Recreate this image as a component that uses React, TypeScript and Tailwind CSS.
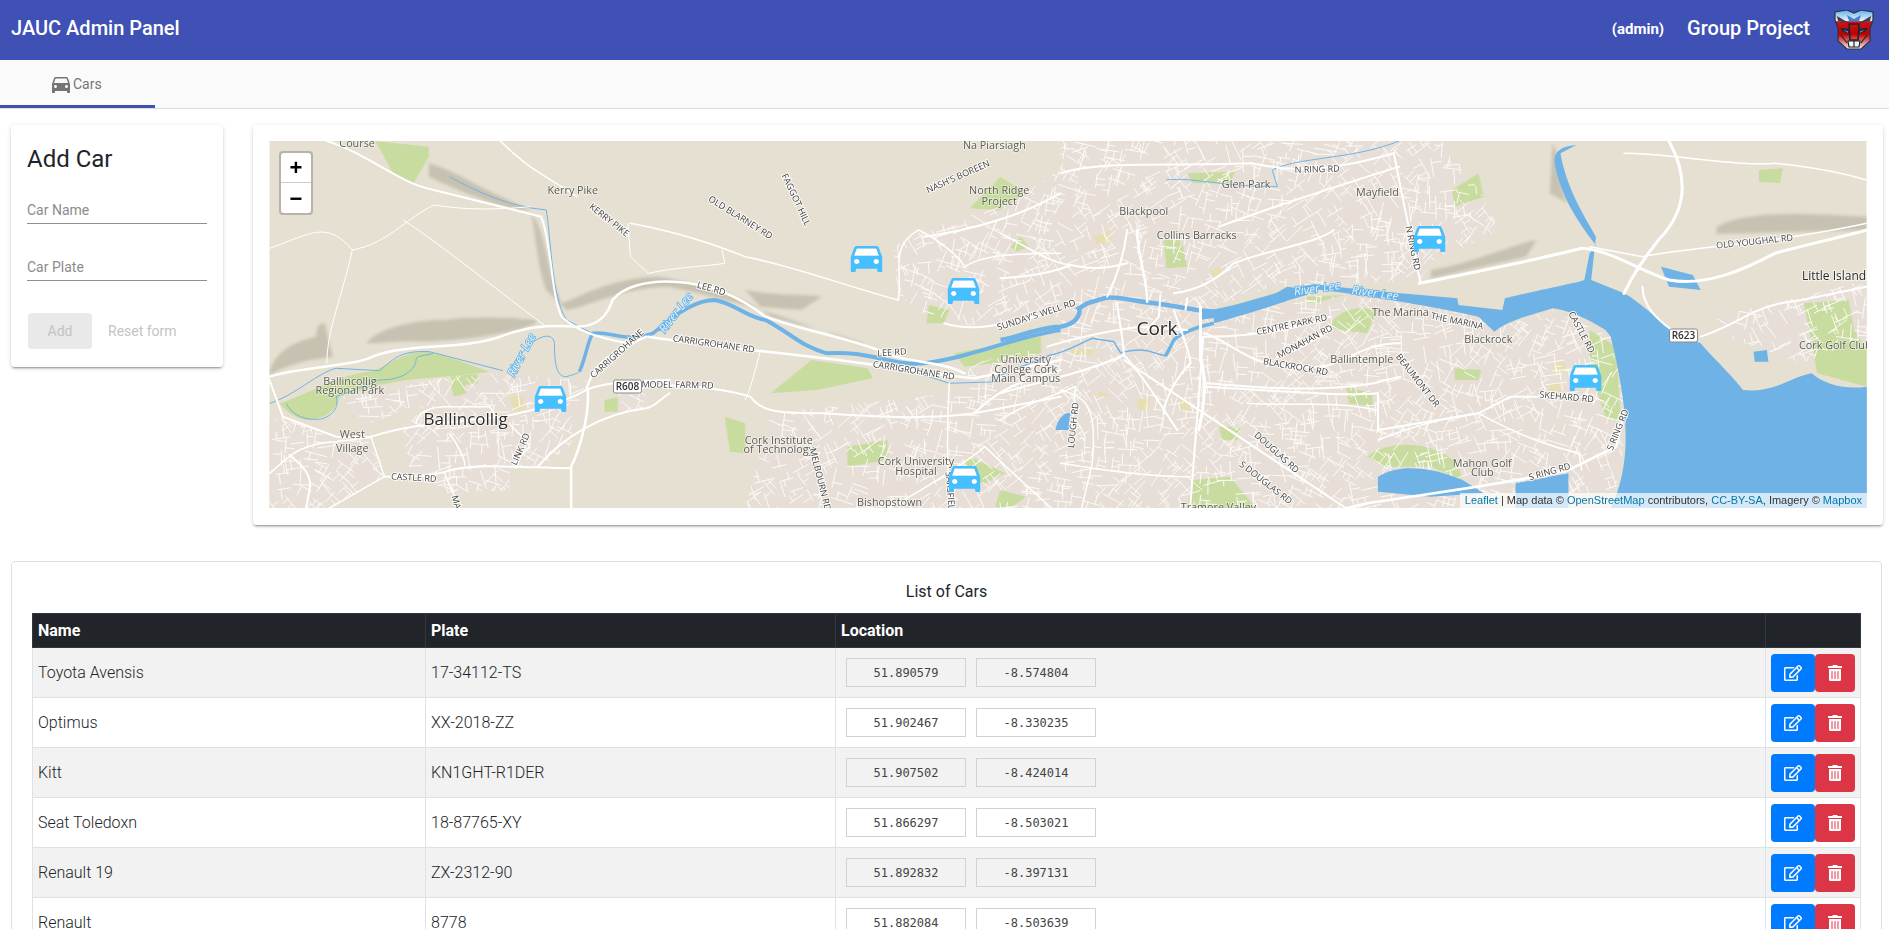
import { MdDirectionsCar } from "react-icons/md";
import { FaRegEdit, FaTrashAlt } from "react-icons/fa";

const cars = [
  { name: "Toyota Avensis", plate: "17-34112-TS", lat: "51.890579", lng: "-8.574804" },
  { name: "Optimus", plate: "XX-2018-ZZ", lat: "51.902467", lng: "-8.330235" },
  { name: "Kitt", plate: "KN1GHT-R1DER", lat: "51.907502", lng: "-8.424014" },
  { name: "Seat Toledoxn", plate: "18-87765-XY", lat: "51.866297", lng: "-8.503021" },
  { name: "Renault 19", plate: "ZX-2312-90", lat: "51.892832", lng: "-8.397131" },
  { name: "Renault", plate: "8778", lat: "51.882084", lng: "-8.503639" },
];

// map paths are traced in crops of the picture, so each crop has its own transform
const WEST = "translate(260 130) scale(.5102 .3333)";
const EAST = "translate(1060 130) scale(.5291 .3333)";
const BALL = "translate(269 300) scale(.3333)";
const CITY = "translate(1000 230) scale(.3333)";

type Shape = [string, string];
type Line = [string, string, number];

const urban: Shape[] = [
  [BALL, "M0 360L40 355L200 410L300 420L345 530L180 624L0 624Z"],
  [BALL, "M400 390L440 345L650 330L720 360L900 300L950 280L900 440L800 510L720 505L720 570L500 580L420 510Z"],
  [BALL, "M220 290L540 230L640 220L800 230L950 240L940 280L720 340L430 320L280 380Z"],
  [BALL, "M1040 270L1130 240L1135 320L1040 345Z"],
  [WEST, "M1000 850L1350 790L1400 700L1568 640L1568 1135L950 1135Z"],
  [WEST, "M1250 500L1240 350L1300 300L1450 230L1568 120L1568 560L1440 590L1330 580Z"],
  [EAST, "M0 33L720 33L800 200L830 300L700 400L680 450L400 470L270 540L0 600Z"],
  [EAST, "M0 560L270 550L420 490L740 520L830 590L930 540L1040 620L1075 850L1050 1080L700 1135L0 1135Z"],
  [EAST, "M1240 560L1400 500L1524 450L1524 620L1400 700L1260 620Z"],
];

const hills: Shape[] = [
  [BALL, "M0 220C10 170 50 130 140 110C140 80 150 70 165 70L175 110L190 170C100 180 40 200 0 225Z"],
  [BALL, "M290 130C320 90 420 60 520 60C600 50 700 50 800 60L800 70C700 110 560 120 480 125C400 120 340 130 290 130Z"],
  [WEST, "M530 250C560 300 560 420 590 520C640 490 700 440 780 440C860 460 950 500 1000 560C1060 590 1150 610 1190 650L1100 600C1040 570 960 520 800 470C720 470 660 520 600 540L560 480C540 400 540 300 530 250Z"],
  [WEST, "M330 100C380 120 420 170 530 240L500 240C430 210 370 170 330 140Z"],
  [WEST, "M950 480C1020 500 1060 490 1100 500L1060 540L980 530Z"],
  [EAST, "M700 420C780 400 860 340 900 330L880 380L700 445Z"],
  [EAST, "M1240 290C1300 240 1400 250 1524 260L1524 300L1240 312Z"],
  [EAST, "M930 40C950 100 940 180 960 220L925 190Z"],
  [CITY, "M720 115L880 120L1000 90L1180 70L1180 110L1000 130L800 160Z"],
];

const parks: Shape[] = [
  [WEST, "M225 33L330 50L330 80L300 160L260 130Z"],
  [BALL, "M30 310C120 280 220 220 300 215C360 200 400 150 480 155C540 170 620 200 660 215L580 225L410 240L330 255L210 290C200 340 150 360 110 360C60 350 40 320 30 310Z"],
  [BALL, "M540 230L580 225L590 280L552 290ZM582 225L625 222L625 250L585 255Z"],
  [BALL, "M1005 300L1045 292L1045 335L1005 335Z"],
  [WEST, "M1080 690L1190 715L1200 745L1090 780L1000 790Z"],
  [WEST, "M1360 670L1530 620L1530 670L1440 700L1380 710Z"],
  [WEST, "M1310 525L1350 540L1340 580L1305 580Z"],
  [WEST, "M1390 235L1450 140L1500 190L1450 240Z"],
  [WEST, "M910 860L950 880L950 970L920 965Z"],
  [WEST, "M1150 950L1230 930L1230 990L1150 1010Z"],
  [WEST, "M1390 980L1460 1030L1420 1060L1360 1040Z"],
  [WEST, "M1450 1080L1500 1100L1470 1135L1440 1130Z"],
  [EAST, "M240 130L330 125L320 160L250 160Z"],
  [EAST, "M195 330L225 330L235 410L200 415Z"],
  [EAST, "M740 180L790 130L800 200L745 230Z"],
  [CITY, "M30 50L60 20L85 50L50 65ZM500 50L545 40L560 110L510 110ZM990 280C1030 230 1080 230 1130 240L1100 310L1010 300ZM915 200L1030 195L960 215L915 220ZM0 350L60 325L120 320L110 355L40 380Z"],
  [EAST, "M745 715L795 720L790 750L745 750Z"],
  [EAST, "M1405 520L1490 510L1500 600L1524 660L1524 770L1430 730L1420 640Z"],
  [EAST, "M1320 120L1365 115L1360 160L1320 155Z"],
  [EAST, "M580 980C620 930 700 930 750 1000L760 1050L700 1010L610 1010Z"],
  [EAST, "M250 1050L320 1040L370 1135L240 1135Z"],
  [EAST, "M1000 600L1050 650L1060 880L1030 860L1000 720Z"],
  [EAST, "M300 890L340 890L335 930L305 930Z"],
  [EAST, "M540 770L590 790L590 830L545 820Z"],
];

const sandy: Shape[] = [
  [BALL, "M718 290L760 285L765 330L735 335Z"],
  [CITY, "M280 20L330 0L330 40L285 45ZM630 120L665 110L660 140L635 140ZM535 500L575 520L565 550L540 540ZM410 510L450 500L445 540L415 540ZM290 485L325 490L320 500L295 500ZM210 360L280 355L280 375L215 375Z"],
  [EAST, "M930 700L955 695L955 730L930 730ZM920 760L945 755L945 790L925 790Z"],
];

const water: Shape[] = [
  [EAST, "M262 545C340 530 420 475 480 462C560 480 650 490 750 505L752 525L835 540L840 505C900 480 960 465 990 450L1000 370L1012 345C990 300 950 220 935 110C930 70 940 50 975 45L945 70C955 170 990 260 1012 320L1003 450L1065 490C1090 510 1130 570 1155 600L1210 640C1230 680 1260 720 1290 780C1350 790 1380 740 1420 730C1440 760 1480 780 1524 770L1524 1135L1040 1135C1080 1000 1075 850 1040 620L1030 600C1000 570 960 540 930 535C880 560 850 570 820 605L790 560C700 530 600 500 480 478C420 500 340 560 262 570Z"],
  [EAST, "M600 1040C640 1000 700 1010 760 1050L800 1090L700 1100L600 1085Z"],
  [EAST, "M860 1060L960 1030L960 1135L860 1135Z"],
  [EAST, "M1135 410L1195 435L1210 480L1150 470Z"],
  [EAST, "M1310 665L1335 660L1338 695L1312 695Z"],
  [CITY, "M165 600C170 570 190 545 210 550L205 600Z"],
  [CITY, "M640 240C720 240 790 215 860 170L900 175L920 195C860 210 800 235 640 280Z"],
];

const rivers: Line[] = [
  [WEST, "M780 600C820 540 860 510 890 510C930 520 950 560 990 570C1040 610 1060 650 1110 670C1190 660 1240 710 1300 700C1400 680 1480 620 1568 600", 4],
  [BALL, "M930 215C950 170 955 120 970 100C1020 90 1060 130 1150 100L1200 60", 3.5],
  [BALL, "M720 210C790 100 850 90 855 130C855 190 860 230 890 230C910 225 925 220 930 215", 1],
  [BALL, "M0 310C70 290 150 215 200 205L330 212C370 180 390 150 480 155L700 212", 1],
  [BALL, "M50 310C70 350 110 360 150 358C190 350 210 320 200 290L330 240C400 240 440 210 440 175C450 165 480 165 490 160", 1],
  [WEST, "M370 140C430 190 490 230 560 240C570 330 570 500 600 570L650 610", 1],
  [WEST, "M1230 700L1350 760L1450 755", 1],
  [CITY, "M0 330C60 320 120 290 180 290C240 280 240 240 235 235L260 220L310 205C340 195 400 215 480 222L590 240L640 245", 4.5],
  [CITY, "M640 280C590 290 540 310 520 330C510 350 500 370 495 378", 3.5],
  [CITY, "M495 378L440 362C400 355 380 365 360 368L340 335L275 325C230 345 190 370 150 375L0 435", 1.5],
  [EAST, "M200 150C250 140 300 170 410 170L400 120C450 80 550 90 640 33", 1],
];

const roads: Line[] = [
  [WEST, "M18 740C80 710 180 710 220 680C280 640 400 660 470 620C520 590 560 585 620 590C660 590 680 560 690 510C710 470 760 450 810 455C880 460 940 500 990 560C1060 600 1140 620 1210 660C1260 700 1330 690 1380 730", 2.5],
  [WEST, "M760 620C850 640 960 660 1080 680C1200 700 1300 730 1400 745L1568 690", 2.5],
  [WEST, "M700 770C800 760 900 770 960 800C980 840 1000 850 1100 850C1200 860 1300 870 1400 850L1568 800", 2],
  [WEST, "M130 33C210 70 270 160 340 180C420 210 500 240 550 260C570 330 570 500 590 560C620 600 650 620 720 640", 2],
  [WEST, "M18 355C100 310 130 270 180 360C160 500 130 600 130 700", 1],
  [WEST, "M180 360C250 340 280 270 340 225C400 240 460 240 530 230", 1],
  [WEST, "M280 270C350 340 430 440 560 590", 1],
  [WEST, "M470 33C520 110 560 140 590 170L620 200", 1.5],
  [WEST, "M725 280C830 310 900 350 950 380C1050 410 1150 470 1250 510", 1.5],
  [WEST, "M720 280L725 380L760 430C820 410 870 410 910 400L905 360", 1],
  [WEST, "M980 660C970 720 960 780 950 810", 1],
  [WEST, "M1350 760C1345 900 1345 1000 1350 1135", 1.5],
  [WEST, "M1400 850C1450 770 1500 750 1568 720", 2],
  [WEST, "M1230 1135C1300 1080 1380 1000 1420 950C1480 1040 1520 1090 1550 1135", 1.5],
  [WEST, "M1250 510C1260 430 1230 350 1290 300C1330 330 1370 380 1380 410C1420 370 1500 370 1568 370", 1.5],
  [WEST, "M1300 320C1350 310 1450 280 1530 220L1568 190", 2],
  [WEST, "M1340 580C1380 600 1430 600 1568 540", 2],
  [BALL, "M950 270C970 200 1000 170 1130 110", 2.5],
  [BALL, "M0 240L40 350L200 410L300 412C400 380 450 375 700 350C800 330 900 300 950 270C1000 250 1050 245 1200 240", 2],
  [BALL, "M955 270C960 350 930 450 905 500L905 624", 2.5],
  [BALL, "M805 500C880 410 1000 340 1130 325C1160 320 1180 290 1200 280", 2],
  [BALL, "M0 520C50 480 80 430 200 425L305 412L345 530L180 624", 1.5],
  [BALL, "M345 530C420 530 480 530 530 515C590 490 700 500 905 505", 2],
  [BALL, "M440 370C440 340 480 320 530 320L660 320C680 340 670 360 690 350", 1.5],
  [BALL, "M540 400C570 440 590 490 585 495M525 520L570 624M720 370C740 400 780 420 780 440L730 495", 1.5],
  [BALL, "M60 465C90 490 130 520 120 570L110 624", 2],
  [EAST, "M1150 33C1190 150 1180 250 1130 330C1100 390 1080 440 1065 490", 3],
  [EAST, "M678 460C800 420 900 390 985 355C1040 360 1090 420 1150 450C1220 470 1290 420 1350 370C1420 340 1480 320 1524 300", 3],
  [EAST, "M1000 350L1100 380C1200 350 1350 340 1524 280", 1.5],
  [EAST, "M1065 70C1150 70 1280 110 1350 100C1420 110 1480 130 1524 150", 1.5],
  [EAST, "M1210 620C1300 570 1300 530 1400 510L1524 470", 2],
  [EAST, "M1100 470C1100 530 1130 570 1155 600", 2],
  [EAST, "M0 130C80 90 200 110 360 100C450 130 520 120 630 70L650 230L680 455", 2],
  [EAST, "M300 290C400 230 560 150 640 110", 2],
  [EAST, "M270 770C400 780 520 800 600 790L600 900L790 850L850 800L1000 800", 2],
  [EAST, "M540 1135L580 1120C700 1090 850 1060 960 1020L1050 950L1065 850", 2.5],
  [EAST, "M600 930C680 880 740 860 790 850C850 900 900 940 980 970L985 1020", 1.5],
  [CITY, "M0 145C100 140 180 120 210 105C280 120 320 115 380 100", 2],
  [CITY, "M320 200C350 140 370 80 380 0", 2],
  [CITY, "M410 0C410 80 440 140 440 215", 2.5],
  [CITY, "M520 190C600 180 660 140 700 100C800 60 950 40 1000 0", 2],
  [CITY, "M600 230L600 390C620 450 610 540 595 600", 3],
  [CITY, "M370 375C430 440 470 510 530 600", 2],
  [CITY, "M370 375C280 420 100 460 0 490", 2],
  [CITY, "M620 460C760 470 940 490 1120 460L1200 440", 2],
  [CITY, "M610 320C700 320 850 310 990 260", 2],
  [CITY, "M610 310C680 330 720 380 800 400C860 410 950 420 1000 400C1060 380 1100 340 1200 340", 2],
  [CITY, "M740 520C850 530 1000 510 1130 540", 1.5],
  [CITY, "M830 380C900 360 960 320 990 290", 2],
  [CITY, "M350 220C360 300 370 340 370 375", 2],
  [CITY, "M520 240C540 300 570 370 570 400C530 440 490 510 490 550", 2],
  [CITY, "M140 350C200 330 330 300 420 290L560 300", 2],
  [CITY, "M480 195L475 260L440 300M560 205L555 240", 2],
  [CITY, "M0 10C80 50 150 100 210 105", 1.5],
  [CITY, "M225 470L215 600M0 570C60 530 120 510 225 470", 1.5],
  [EAST, "M120 690L540 1135", 2],
  [EAST, "M270 620L245 1135", 2],
  [EAST, "M0 1000C80 1020 160 1040 245 1040", 1.5],
  [EAST, "M0 780C50 800 70 830 60 1000L40 1135", 1.5],
];

type Label = [string, number, number, number, "p" | "r" | "b" | "c" | "i" | "w"];

// positions are centres measured on the 1568 wide preview
const labels: Label[] = [
  ["Course", 296, 120, 0, "p"],
  ["Kerry Pike", 475, 159, 0, "p"],
  ["KERRY PIKE", 505, 183, 38, "r"],
  ["OLD BLARNEY RD", 614, 181, 32, "r"],
  ["FAGGOT HILL", 660, 166, 65, "r"],
  ["Na Piarsiagh", 825, 121, 0, "p"],
  ["NASH'S BOREEN", 795, 147, -24, "r"],
  ["North Ridge", 829, 159, 0, "p"],
  ["Project", 829, 168, 0, "p"],
  ["LEE RD", 590, 240, 16, "r"],
  ["River Lee", 561, 260, -52, "w"],
  ["River Lee", 433, 295, -62, "w"],
  ["CARRIGROHANE", 512, 294, -42, "r"],
  ["CARRIGROHANE RD", 592, 286, 8, "r"],
  ["CARRIGROHANE RD", 758, 308, 9, "r"],
  ["LEE RD", 740, 293, -4, "r"],
  ["SUNDAY'S WELL RD", 860, 262, -18, "r"],
  ["University", 851, 299, 0, "p"],
  ["College Cork", 851, 307, 0, "p"],
  ["Main Campus", 851, 315, 0, "p"],
  ["MODEL FARM RD", 562, 320, 1, "r"],
  ["Ballincollig", 290, 317, 0, "p"],
  ["Regional Park", 290, 325, 0, "p"],
  ["Ballincollig", 386, 349, 0, "c"],
  ["West", 292, 361, 0, "p"],
  ["Village", 292, 373, 0, "p"],
  ["LINK RD", 432, 373, -66, "r"],
  ["CASTLE RD", 343, 397, 3, "r"],
  ["Cork Institute", 646, 366, 0, "p"],
  ["of Technology", 646, 374, 0, "p"],
  ["MELBOURN RD", 680, 398, 76, "r"],
  ["Cork University", 760, 384, 0, "p"],
  ["Hospital", 760, 392, 0, "p"],
  ["Bishopstown", 738, 418, 0, "p"],
  ["SARSFIELD", 788, 410, 85, "r"],
  ["MA", 378, 417, 76, "r"],
  ["N RING RD", 1093, 141, -2, "r"],
  ["Glen Park", 1034, 154, 0, "p"],
  ["Mayfield", 1143, 160, 0, "p"],
  ["Blackpool", 949, 176, 0, "p"],
  ["Collins Barracks", 993, 196, 0, "p"],
  ["N RING RD", 1172, 206, 78, "r"],
  ["OLD YOUGHAL RD", 1456, 201, -6, "r"],
  ["Little Island", 1522, 230, 0, "i"],
  ["River Lee", 1093, 240, -8, "w"],
  ["River Lee", 1141, 244, 8, "w"],
  ["The Marina", 1162, 260, 0, "p"],
  ["THE MARINA", 1209, 267, 12, "r"],
  ["Cork", 960, 274, 0, "b"],
  ["CENTRE PARK RD", 1072, 270, -12, "r"],
  ["MONAHAN RD", 1083, 284, -28, "r"],
  ["Blackrock", 1235, 282, 0, "p"],
  ["CASTLE RD", 1312, 276, 62, "r"],
  ["Cork Golf Club", 1523, 287, 0, "p"],
  ["Ballintemple", 1130, 299, 0, "p"],
  ["BLACKROCK RD", 1075, 305, 10, "r"],
  ["BEAUMONT DR", 1176, 316, 52, "r"],
  ["SKEHARD RD", 1300, 330, 5, "r"],
  ["LOUGH RD", 891, 353, -84, "r"],
  ["DOUGLAS RD", 1059, 376, 42, "r"],
  ["S DOUGLAS RD", 1050, 401, 38, "r"],
  ["S RING RD", 1286, 392, -16, "r"],
  ["S RING RD", 1343, 357, -68, "r"],
  ["Mahon Golf", 1230, 385, 0, "p"],
  ["Club", 1230, 393, 0, "p"],
  ["Tramore Valley", 1011, 422, 0, "p"],
];

const markers = [
  [866, 259],
  [963, 291],
  [550, 399],
  [964, 479],
  [1429, 239],
  [1585, 378],
];

const shields: [string, number, number][] = [
  ["R608", 627, 386],
  ["R623", 1683, 335],
];

// little residential combs of white streets, same every render
function streetCombs(x0: number, y0: number, x1: number, y1: number, step: number) {
  let seed = 11;
  const rnd = () => {
    seed = (seed * 16807) % 2147483647;
    return seed / 2147483647;
  };
  let d = "";
  for (let y = y0; y < y1; y += step) {
    for (let x = x0; x < x1; x += step) {
      const px = x + rnd() * step;
      const py = y + rnd() * step;
      const a = Math.floor(x / 90 + y / 70) * 0.7 + (rnd() - 0.5) * 0.5 + (rnd() > 0.5 ? 1.57 : 0);
      const len = step * (0.9 + rnd() * 0.9);
      const cos = Math.cos(a);
      const sin = Math.sin(a);
      d += `M${px.toFixed(1)} ${py.toFixed(1)}l${(cos * len).toFixed(1)} ${(sin * len).toFixed(1)}`;
      const stubs = Math.floor(rnd() * 3);
      for (let s = 0; s < stubs; s++) {
        const t = (s + 0.6) / 2.4;
        const side = rnd() > 0.5 ? 1 : -1;
        const l = 5 + rnd() * 6;
        d += `M${(px + cos * len * t).toFixed(1)} ${(py + sin * len * t).toFixed(1)}l${(-sin * l * side).toFixed(1)} ${(cos * l * side).toFixed(1)}`;
      }
    }
  }
  return d;
}

const labelStyle = {
  p: { size: 10.8, fill: "#5c5a55", halo: "#ffffff", op: 0.55, w: 1.5 },
  r: { size: 9, fill: "#3f3f3f", halo: "#ffffff", op: 0.85, w: 2 },
  b: { size: 19, fill: "#2a2a2a", halo: "#ffffff", op: 0.6, w: 2 },
  c: { size: 17, fill: "#2a2a2a", halo: "#ffffff", op: 0.6, w: 2 },
  i: { size: 12, fill: "#2a2a2a", halo: "#ffffff", op: 0.6, w: 2 },
  w: { size: 12, fill: "#e9f4fc", halo: "#5fb0e6", op: 1, w: 1.6 },
};

function MapLabel({ label }: { label: Label }) {
  const [text, rx, ry, rot, kind] = label;
  const st = labelStyle[kind];
  return (
    <text
      transform={`translate(${rx * 1.2047} ${ry * 1.2047}) rotate(${rot})`}
      textAnchor="middle"
      dominantBaseline="middle"
      fontFamily="'Open Sans', sans-serif"
      fontSize={st.size}
      fontStyle={kind === "w" ? "italic" : undefined}
      fill={st.fill}
      stroke={st.halo}
      strokeOpacity={st.op}
      strokeWidth={st.w}
      paintOrder="stroke"
    >
      {text}
    </text>
  );
}

function CorkMap() {
  return (
    <svg viewBox="269 141 1597 367" className="block w-full h-full">
      <defs>
        <clipPath id="urban">
          {urban.map(([t, d], i) => (
            <path key={i} transform={t} d={d} />
          ))}
        </clipPath>
        <filter id="soft">
          <feGaussianBlur stdDeviation="1.5" />
        </filter>
      </defs>

      <rect x="269" y="141" width="1597" height="367" fill="#e6e0d2" />

      <g filter="url(#soft)" fill="#bfb9a8" opacity="0.8">
        {hills.map(([t, d], i) => (
          <path key={i} transform={t} d={d} />
        ))}
      </g>

      {urban.map(([t, d], i) => (
        <path key={i} transform={t} d={d} fill="#e7dfd7" />
      ))}

      {parks.map(([t, d], i) => (
        <path key={i} transform={t} d={d} fill="#c9dc9f" />
      ))}
      {sandy.map(([t, d], i) => (
        <path key={i} transform={t} d={d} fill="#e8deb4" />
      ))}

      <path
        clipPath="url(#urban)"
        d={streetCombs(269, 141, 1866, 508, 13)}
        fill="none"
        stroke="#fbf9f6"
        strokeWidth="1"
        strokeLinecap="round"
      />

      {rivers.map(([t, d, w], i) => (
        <path key={i} transform={t} d={d} fill="none" stroke="#6fb3e6" strokeWidth={w} vectorEffect="non-scaling-stroke" />
      ))}
      {water.map(([t, d], i) => (
        <path key={i} transform={t} d={d} fill="#6fb3e6" />
      ))}

      {roads.map(([t, d, w], i) => (
        <path
          key={i}
          transform={t}
          d={d}
          fill="none"
          stroke="#ffffff"
          strokeWidth={w}
          strokeLinecap="round"
          vectorEffect="non-scaling-stroke"
        />
      ))}

      {labels.map((l, i) => (
        <MapLabel key={i} label={l} />
      ))}

      {shields.map(([text, x, y]) => (
        <g key={text}>
          <rect x={x - 14} y={y - 6} width="28" height="13" rx="2" fill="#fff" stroke="#8a8a8a" />
          <text x={x} y={y + 4} textAnchor="middle" fontFamily="'Open Sans', sans-serif" fontSize="10" fontWeight="600" fill="#333">
            {text}
          </text>
        </g>
      ))}

      {markers.map(([x, y], i) => (
        <svg key={i} x={x - 16} y={y - 13} width="32" height="26" viewBox="3 5 18 16" preserveAspectRatio="none">
          <path d="M5 11l1.5-4.5h11L19 11z" fill="#fff" />
          <circle cx="6.5" cy="14.5" r="1.5" fill="#fff" />
          <circle cx="17.5" cy="14.5" r="1.5" fill="#fff" />
          <path
            fill="#45bfff"
            d="M18.92 6.01C18.72 5.42 18.16 5 17.5 5h-11c-.66 0-1.21.42-1.42 1.01L3 12v8c0 .55.45 1 1 1h1c.55 0 1-.45 1-1v-1h12v1c0 .55.45 1 1 1h1c.55 0 1-.45 1-1v-8l-2.08-5.99zM6.5 16c-.83 0-1.5-.67-1.5-1.5S5.67 13 6.5 13s1.5.67 1.5 1.5S7.33 16 6.5 16zm11 0c-.83 0-1.5-.67-1.5-1.5s.67-1.5 1.5-1.5 1.5.67 1.5 1.5-.67 1.5-1.5 1.5zM5 11l1.5-4.5h11L19 11H5z"
          />
        </svg>
      ))}
    </svg>
  );
}

function AutobotLogo() {
  return (
    <svg viewBox="0 0 40 40" className="w-10 h-10">
      <defs>
        <linearGradient id="bot" x1="0" y1="0" x2="0" y2="1">
          <stop offset="0" stopColor="#5db2ea" />
          <stop offset="0.27" stopColor="#e8f1f7" />
          <stop offset="0.3" stopColor="#c8141a" />
          <stop offset="0.62" stopColor="#c00000" />
          <stop offset="1" stopColor="#f4f0f0" />
        </linearGradient>
      </defs>
      <path d="M1 2L13 0L20 3L27 0L39 2L39 10L36 18L36 31L27 39L13 39L4 31L4 18L1 10Z" fill="url(#bot)" stroke="#2c3440" strokeWidth="1.2" />
      <path d="M13 5L20 9L27 5L25 11L15 11Z" fill="#3f7fd6" />
      <path d="M3 6L15 13L4 11ZM37 6L25 13L36 11Z" fill="#39414c" />
      <path d="M15 14L25 14L24 30L16 30Z" fill="none" stroke="#20242c" strokeWidth="1.6" />
      <path d="M6 18L16 19L16 24L9 22ZM34 18L24 19L24 24L31 22Z" fill="#20242c" />
      <path d="M9 20L14 21L14 23ZM31 20L26 21L26 23Z" fill="#4f7de0" />
      <path d="M14 31L26 31L25 37L15 37Z" fill="#f4f4f4" stroke="#20242c" strokeWidth="1.2" />
      <path d="M20 31V37M7 25L13 33M33 25L27 33" stroke="#20242c" strokeWidth="1.2" />
    </svg>
  );
}

function Field({ label }: { label: string }) {
  return (
    <div className="h-[32px] flex items-end pb-[3px] border-b border-[#8f8f8f] text-sm text-[#8c8c8c]">
      {label}
    </div>
  );
}

function CoordBox({ value }: { value: string }) {
  return (
    <span className="w-[120px] h-[29px] flex items-center justify-center border border-[#d2d2d2] font-['DejaVu_Sans_Mono',monospace] text-[12px] text-[#444]">
      {value}
    </span>
  );
}

export default function App() {
  return (
    <div className="h-screen overflow-hidden bg-white font-['Roboto',sans-serif] text-[#212529]">
      <header className="h-[60px] bg-[#3f51b5] flex items-center pl-[11px] pr-[15px] text-white">
        <h1 className="text-xl font-medium mb-1">JAUC Admin Panel</h1>
        <span className="ml-auto text-[15px] font-bold mb-[1px]">(admin)</span>
        <span className="ml-[23px] text-xl font-medium mb-1">Group Project</span>
        <span className="ml-6">
          <AutobotLogo />
        </span>
      </header>

      <nav className="h-[49px] bg-[#fafafa] border-b border-[#dedede]">
        <div className="w-[155px] h-[48px] border-b-[3px] border-[#3f51b5] flex items-center pl-[49px] text-sm text-[#757575] pt-[3px]">
          <MdDirectionsCar className="w-[24px] h-[24px]" />
          <span>Cars</span>
        </div>
      </nav>

      <div className="flex items-start gap-[30px] pl-[11px] pr-[6px] mt-4">
        <section className="w-[212px] h-[242px] shrink-0 rounded bg-white px-4 pt-[18px] shadow-[0_2px_2px_0_rgba(0,0,0,0.14),0_3px_1px_-2px_rgba(0,0,0,0.2),0_1px_5px_0_rgba(0,0,0,0.12)]">
          <h2 className="text-2xl leading-[32px]">Add Car</h2>
          <div className="mt-[17px] flex flex-col gap-[25px]">
            <Field label="Car Name" />
            <Field label="Car Plate" />
          </div>
          <div className="mt-[32px] flex items-center text-sm text-[#c4c4c4]">
            <span className="w-16 h-9 ml-px rounded bg-[#e9e9e9] flex items-center justify-center">Add</span>
            <span className="ml-4">Reset form</span>
          </div>
        </section>

        <section className="flex-1 h-[400px] rounded bg-white p-4 shadow-[0_2px_2px_0_rgba(0,0,0,0.14),0_3px_1px_-2px_rgba(0,0,0,0.2),0_1px_5px_0_rgba(0,0,0,0.12)]">
          <div className="relative h-[367px] overflow-hidden">
            <CorkMap />
            <div className="absolute left-[10px] top-[10px] w-[34px] rounded border-2 border-[#00000033] bg-clip-padding font-['Liberation_Sans',sans-serif] font-bold text-[22px] text-black">
              <div className="h-[30px] bg-white border-b border-[#ccc] rounded-t-sm flex items-center justify-center">+</div>
              <div className="h-[30px] bg-white rounded-b-sm flex items-center justify-center">−</div>
            </div>
            <div className="absolute right-0 bottom-0 h-[15px] px-[5px] bg-white/70 font-['Liberation_Sans',sans-serif] text-[11px] leading-[15px] text-[#333]">
              <span className="text-[#0078a8]">Leaflet</span> | Map data © <span className="text-[#0078a8]">OpenStreetMap</span> contributors, <span className="text-[#0078a8]">CC-BY-SA</span>, Imagery © <span className="text-[#0078a8]">Mapbox</span>
            </div>
          </div>
        </section>
      </div>

      <section className="ml-[11px] mr-[7px] mt-9 rounded border border-[#dfdfdf] pl-[20px] pr-[20px] pt-[19px]">
        <p className="text-center h-[32px] leading-[22px]">List of Cars</p>
        <table className="w-full table-fixed border-collapse">
          <colgroup>
            <col className="w-[393px]" />
            <col className="w-[410px]" />
            <col />
            <col className="w-[95px]" />
          </colgroup>
          <thead>
            <tr className="h-[34px] bg-[#212529] text-white text-left font-bold">
              <th className="px-[5px] border border-[#32383e]">Name</th>
              <th className="px-[5px] border border-[#32383e]">Plate</th>
              <th className="px-[5px] border border-[#32383e]">Location</th>
              <th className="border border-[#32383e]" />
            </tr>
          </thead>
          <tbody className="font-light">
            {cars.map((car, i) => (
              <tr key={car.plate} className={i % 2 === 0 ? "h-[50px] bg-[#f2f2f2]" : "h-[50px] bg-white"}>
                <td className="px-[5px] border border-[#dee2e6]">{car.name}</td>
                <td className="px-[5px] border border-[#dee2e6]">{car.plate}</td>
                <td className="pl-[10px] border border-[#dee2e6]">
                  <div className="flex gap-[10px]">
                    <CoordBox value={car.lat} />
                    <CoordBox value={car.lng} />
                  </div>
                </td>
                <td className="pl-[5px] border border-[#dee2e6]">
                  <div className="flex">
                    <span className="w-[44px] h-[38px] rounded bg-[#007bff] text-white flex items-center justify-center">
                      <FaRegEdit className="w-[18px] h-4" />
                    </span>
                    <span className="w-[40px] h-[38px] rounded bg-[#dc3545] text-white flex items-center justify-center">
                      <FaTrashAlt className="w-[14px] h-4" />
                    </span>
                  </div>
                </td>
              </tr>
            ))}
          </tbody>
        </table>
      </section>
    </div>
  );
}
